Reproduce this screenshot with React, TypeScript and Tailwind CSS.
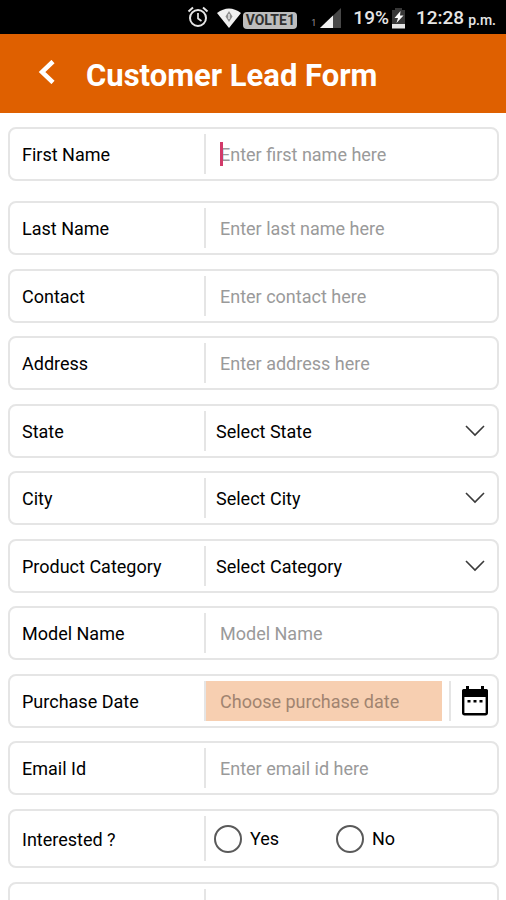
import React from "react";

type Field = {
  id: string;
  label: string;
  hint: string;
  kind: "text" | "select" | "date";
};

const fields: Field[] = [
  { id: "last-name", label: "Last Name", hint: "Enter last name here", kind: "text" },
  { id: "contact", label: "Contact", hint: "Enter contact here", kind: "text" },
  { id: "address", label: "Address", hint: "Enter address here", kind: "text" },
  { id: "state", label: "State", hint: "Select State", kind: "select" },
  { id: "city", label: "City", hint: "Select City", kind: "select" },
  { id: "category", label: "Product Category", hint: "Select Category", kind: "select" },
  { id: "model", label: "Model Name", hint: "Model Name", kind: "text" },
  { id: "purchase-date", label: "Purchase Date", hint: "Choose purchase date", kind: "date" },
  { id: "email", label: "Email Id", hint: "Enter email id here", kind: "text" },
];

const card = "flex rounded-lg border-2 border-[#e5e5e5] bg-white py-[5px] pl-0.5";
const labelCell =
  "flex w-2/5 shrink-0 items-center border-r-2 border-[#e5e5e5] pt-0.5 pl-2.5 text-black";
const inputBase =
  "w-full min-w-0 flex-1 bg-transparent pt-0.5 pl-3.5 outline-none placeholder:text-[#9a9a9a]";

const StatusBar = () => {
  return (
    <div className="flex h-[34px] items-center justify-end bg-black pt-0.5 pr-2.5 text-[#e6e6e6]">
      <svg className="mr-2 mb-0.5 size-[22px]" viewBox="0 0 22 22" fill="none" stroke="currentColor" strokeWidth="2">
        <circle cx="11" cy="12" r="8" />
        <path d="M11 7v5.5l3.5 2.5" strokeWidth="1.7" />
        <path d="M1.5 5.5 6 1.5M20.5 5.5 16 1.5" />
      </svg>
      <svg className="h-5 w-6" viewBox="0 0 24 20">
        <path d="M0 5Q12-4 24 5L12 20Z" fill="#f0f0f0" />
        <path d="M12 3 15.5 8.5 12 14 8.5 8.5Z" fill="#8f8f8f" />
        <path d="M12 6v5" stroke="#e6e6e6" strokeWidth="1.5" />
      </svg>
      <span className="mt-1 ml-0.5 flex h-[17px] w-[54px] items-center justify-center rounded bg-[#bdbdbd] text-sm font-bold text-[#303030]">
        VOLTE1
      </span>
      <span className="mt-2.5 ml-3.5 text-[9px] text-[#999]">1</span>
      <svg className="ml-1 h-5 w-[21px]" viewBox="0 0 21 20">
        <path d="M0 20 21 0V20Z" fill="#484848" />
        <path d="M0 20 13 7.6V20Z" fill="#f0f0f0" />
      </svg>
      <span className="ml-3 text-[19px] font-medium">19%</span>
      <svg className="ml-0.5 h-[21px] w-[15px]" viewBox="0 0 15 21">
        <path d="M4 0h7v2h3v14H1V2h3Z" fill="#383838" />
        <path d="M1 16h13v4.5H1Z" fill="#e6e6e6" />
        <path d="M9.5 3 3.5 10H7L5.5 15l7-7.5H9Z" fill="#fff" />
      </svg>
      <span className="ml-2.5 text-[19px] font-medium">12:28</span>
      <span className="mt-1 ml-1 text-sm font-medium">p.m.</span>
    </div>
  );
};

const FieldControl = ({ field }: { field: Field }) => {
  if (field.kind === "select") {
    return (
      <div className="relative flex flex-1">
        <select
          id={field.id}
          className="w-full appearance-none bg-transparent pt-0.5 pl-2.5 text-black outline-none"
        >
          <option>{field.hint}</option>
        </select>
        <svg
          className="pointer-events-none absolute top-3.5 right-3 h-3 w-5"
          viewBox="0 0 20 12"
          fill="none"
          stroke="#3a3a3a"
          strokeWidth="1.6"
        >
          <path d="m1 1 9 9 9-9" />
        </svg>
      </div>
    );
  }

  if (field.kind === "date") {
    return (
      <div className="flex flex-1">
        <input
          id={field.id}
          type="text"
          placeholder={field.hint}
          className="w-full min-w-0 flex-1 bg-[#f7cfb1] pt-0.5 pl-3.5 outline-none placeholder:text-[#a18470]"
        />
        <button
          type="button"
          aria-label="Open calendar"
          className="ml-[7px] flex items-center border-l-2 border-[#e5e5e5] pr-2 pl-2.5"
        >
          <svg className="h-[30px] w-7" viewBox="0 0 28 30">
            <path d="M5 0h3v4H5zM20 0h3v4h-3z" />
            <path d="M3 3h22a2 2 0 0 1 2 2v6H1V5a2 2 0 0 1 2-2Z" />
            <rect x="2.2" y="4.2" width="23.6" height="24" rx="1.5" fill="none" stroke="#000" strokeWidth="2.4" />
            <path d="M6.5 14h3v2.5h-3zM12.5 14h3v2.5h-3zM18.5 14h3v2.5h-3z" />
          </svg>
        </button>
      </div>
    );
  }

  return <input id={field.id} type="text" placeholder={field.hint} className={inputBase} />;
};

const App = () => {
  return (
    <div className="h-screen overflow-hidden bg-white font-[Roboto,sans-serif] text-lg">
      <StatusBar />
      <header className="flex h-[79px] items-center bg-[#df6000] pl-9 text-white">
        <button type="button" aria-label="Back" className="mr-7 mb-1">
          <svg className="h-6 w-[22px]" viewBox="0 0 22 24" fill="none" stroke="currentColor" strokeWidth="4.5">
            <path d="M17 1.5 6 12l11 10.5" />
          </svg>
        </button>
        <h1 className="mt-1.5 text-[31px] font-bold">Customer Lead Form</h1>
      </header>

      <form className="pt-3.5 pr-[7px] pl-2">
        <div className={`${card} mb-5 h-[54px]`}>
          <label htmlFor="first-name" className={labelCell}>
            First Name
          </label>
          <div className="relative flex flex-1">
            <input id="first-name" type="text" placeholder="Enter first name here" className={inputBase} />
            {/* text cursor */}
            <span className="absolute top-2 left-3.5 h-6 w-[3px] bg-[#d23a6a]" />
          </div>
        </div>

        {fields.map((field) => (
          <div key={field.id} className={`${card} h-[54px] odd:mb-[13px] even:mb-3.5`}>
            <label htmlFor={field.id} className={labelCell}>
              {field.label}
            </label>
            <FieldControl field={field} />
          </div>
        ))}

        <div role="radiogroup" aria-labelledby="interested-label" className={`${card} mb-3.5 h-[59px]`}>
          <div id="interested-label" className={labelCell}>
            Interested ?
          </div>
          <div className="flex flex-1 items-center pl-2">
            {["Yes", "No"].map((answer) => (
              <label key={answer} className="flex w-[122px] items-center gap-2 text-black">
                <input
                  type="radio"
                  name="interested"
                  value={answer}
                  className="size-7 appearance-none rounded-full border-2 border-[#5a5a5a] checked:border-8"
                />
                {answer}
              </label>
            ))}
          </div>
        </div>

        {/* next row, continues below the fold */}
        <div className={`${card} h-[54px]`}>
          <div className={labelCell} />
        </div>
      </form>
    </div>
  );
};

export default App;
